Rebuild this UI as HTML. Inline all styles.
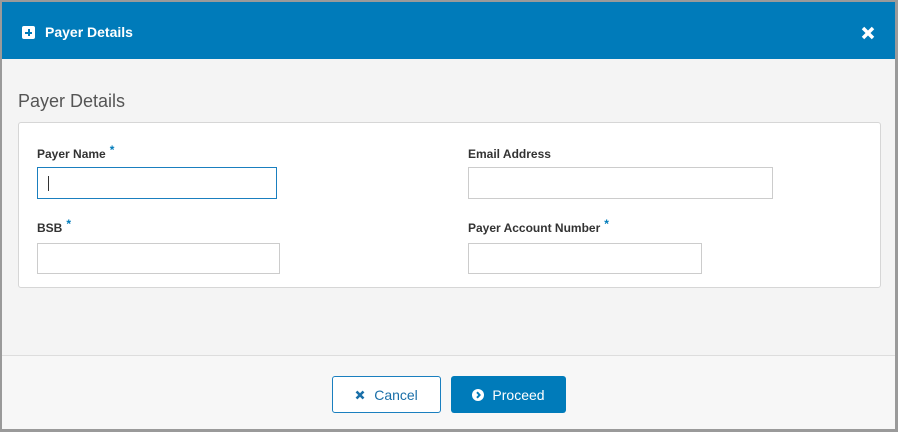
<!DOCTYPE html><html><head><style>
body{margin:0;background:#fff;font-family:"Liberation Sans",sans-serif;}
.dlg{position:absolute;left:0;top:0;width:893px;height:427px;border:2px solid #9a9a9a;border-right-width:3px;border-bottom-width:3px;background:#f4f4f4;}
.hd{position:absolute;left:0;top:0;right:0;height:57px;background:#007bba;color:#fff;}
.hd .t{position:absolute;left:43px;top:22px;font-size:14px;font-weight:bold;}
.plus{position:absolute;left:20px;top:24px;width:13px;height:13px;background:#fff;border-radius:2px;}
.plus:before{content:"";position:absolute;left:3px;top:5.5px;width:7px;height:2px;background:#007bba}
.plus:after{content:"";position:absolute;left:5.5px;top:3px;width:2px;height:7px;background:#007bba}
.x{position:absolute;left:859px;top:24px;}
h2{position:absolute;left:16px;top:89px;margin:0;font-weight:normal;font-size:18px;color:#555;}
.pn{position:absolute;left:16px;top:120px;width:861px;height:164px;background:#fff;border:1px solid #d6d6d6;border-radius:3px;}
.lb{position:absolute;font-size:12px;font-weight:bold;color:#333;}
.lb i{color:#007bba;font-style:normal;position:relative;top:-4px;margin-left:4px}
.in{position:absolute;height:30px;background:#fff;border:1px solid #ccc;box-sizing:border-box;}
.ft{position:absolute;left:0;right:0;top:353px;bottom:0;background:#f7f7f7;border-top:1px solid #ddd;}
.b{position:absolute;top:20px;height:37px;box-sizing:border-box;border-radius:3px;font-size:14px;display:flex;align-items:center;justify-content:center;}
</style></head><body><div class="dlg">
<div class="hd"><div class="plus"></div><div class="t">Payer Details</div>
<svg class="x" width="14" height="14" viewBox="0 0 14 14"><path d="M2 2L12 12M12 2L2 12" stroke="#fff" stroke-width="3.5"/></svg></div>
<h2>Payer Details</h2>
<div class="pn">
<div class="lb" style="left:18px;top:24px">Payer Name<i>*</i></div>
<div class="in" style="left:18px;top:44px;width:240px;height:32px;border-color:#1a7fbf"><div style="position:absolute;left:10px;top:8px;width:1px;height:15px;background:#333"></div></div>
<div class="lb" style="left:449px;top:24px">Email Address</div>
<div class="in" style="left:449px;top:44px;width:305px;height:32px"></div>
<div class="lb" style="left:18px;top:98px">BSB<i>*</i></div>
<div class="in" style="left:18px;top:120px;width:243px;height:31px"></div>
<div class="lb" style="left:449px;top:98px">Payer Account Number<i>*</i></div>
<div class="in" style="left:449px;top:120px;width:234px;height:31px"></div>
</div>
<div class="ft">
<div class="b" style="left:330px;width:109px;border:1px solid #1a7fbf;background:#fff;color:#1a6fa8"><svg width="10" height="10" viewBox="0 0 10 10" style="margin-right:9px"><path d="M1.5 1.5L8.5 8.5M8.5 1.5L1.5 8.5" stroke="#1a6fa8" stroke-width="2.6"/></svg>Cancel</div>
<div class="b" style="left:449px;width:115px;background:#007bba;color:#fff"><svg width="12" height="12" viewBox="0 0 12 12" style="margin-right:8px"><circle cx="6" cy="6" r="6" fill="#fff"/><path d="M5 3.2L7.6 6L5 8.8" stroke="#007bba" stroke-width="2" fill="none"/></svg>Proceed</div>
</div></div></body></html>
